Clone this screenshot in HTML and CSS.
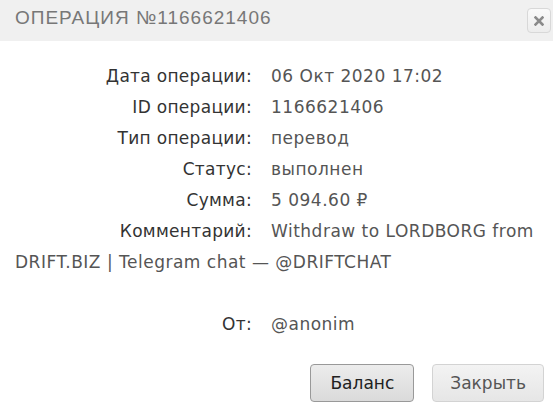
FILE: index.html
```html
<!DOCTYPE html>
<html lang="ru">
<head>
  <meta charset="UTF-8" />
  <meta name="viewport" content="width=device-width, initial-scale=1" />
  <title>Операция №1166621406</title>
  <link rel="stylesheet" href="styles.css">
</head>
<body>
  <div class="dialog">
    <div class="titlebar">
      <span class="title">Операция №1166621406</span>
      <button class="btn-close" aria-label="Закрыть">
        <svg width="10" height="10" viewBox="0 0 10 10">
          <path d="M1.5 1.5 L8.5 8.5 M8.5 1.5 L1.5 8.5" stroke="#8a8a8a" stroke-width="2.6" stroke-linecap="square" />
        </svg>
      </button>
    </div>

    <div class="content">
      <div class="row"><span class="label">Дата операции:</span><span class="value">06 Окт 2020 17:02</span></div>
      <div class="row"><span class="label">ID операции:</span><span class="value">1166621406</span></div>
      <div class="row"><span class="label">Тип операции:</span><span class="value">перевод</span></div>
      <div class="row"><span class="label">Статус:</span><span class="value">выполнен</span></div>
      <div class="row"><span class="label">Сумма:</span><span class="value">5 094.60 ₽</span></div>
      <div class="row"><span class="label">Комментарий:</span><span class="value">Withdraw to LORDBORG from DRIFT.BIZ | Telegram chat — @DRIFTCHAT</span></div>
      <div class="row empty"></div>
      <div class="row"><span class="label">От:</span><span class="value">@anonim</span></div>
    </div>

    <div class="buttonpane">
      <button class="btn btn-hover">Баланс</button>
      <button class="btn btn-close-text">Закрыть</button>
    </div>
  </div>
</body>
</html>
```

FILE: styles.css
```css
* {
  margin: 0;
  padding: 0;
  box-sizing: border-box;
}

html, body {
  background: #ffffff;
  width: 553px;
  height: 408px;
  overflow: hidden;
}

.dialog {
  width: 553px;
  height: 408px;
  display: flex;
  flex-direction: column;
}

.titlebar {
  display: flex;
  justify-content: space-between;
  align-items: flex-start;
  height: 41px;
  background: #f0f0f0;
  padding: 7px 2px 0 15px;
}

.title {
  font-family: "Liberation Sans", Arial, sans-serif;
  font-size: 19px;
  line-height: 22px;
  letter-spacing: 1px;
  text-transform: uppercase;
  color: #777777;
}

.btn-close {
  width: 24px;
  height: 25px;
  margin-top: 1px;
  border: 1px solid #d8d8d8;
  border-radius: 4px;
  background: linear-gradient(#f9f9f9, #ededed);
  display: flex;
  align-items: center;
  justify-content: center;
  cursor: pointer;
}

.content {
  padding: 20px 15px 0;
  font-family: "DejaVu Sans", Verdana, sans-serif;
  font-size: 17px;
  line-height: 31px;
  letter-spacing: 0.5px;
  color: #555555;
}

.row {
  min-height: 31px;
}

.label {
  display: inline-block;
  width: 237px;
  margin-right: 19px;
  text-align: right;
  letter-spacing: 0.3px;
  color: #333333;
}

.buttonpane {
  display: flex;
  justify-content: flex-end;
  gap: 18px;
  padding: 24px 9px 0 0;
}

.btn {
  height: 38px;
  padding: 0 19px;
  font-family: "DejaVu Sans", Verdana, sans-serif;
  font-size: 17px;
  color: #555555;
  border: 1px solid #d3d3d3;
  border-radius: 4px;
  background: linear-gradient(#f3f3f3, #e6e6e6);
  cursor: pointer;
}

.btn-close-text {
  padding: 0 17px;
}

.btn-hover {
  color: #212121;
  border-color: #999999;
  background: linear-gradient(#ececec, #dadada);
}
```
